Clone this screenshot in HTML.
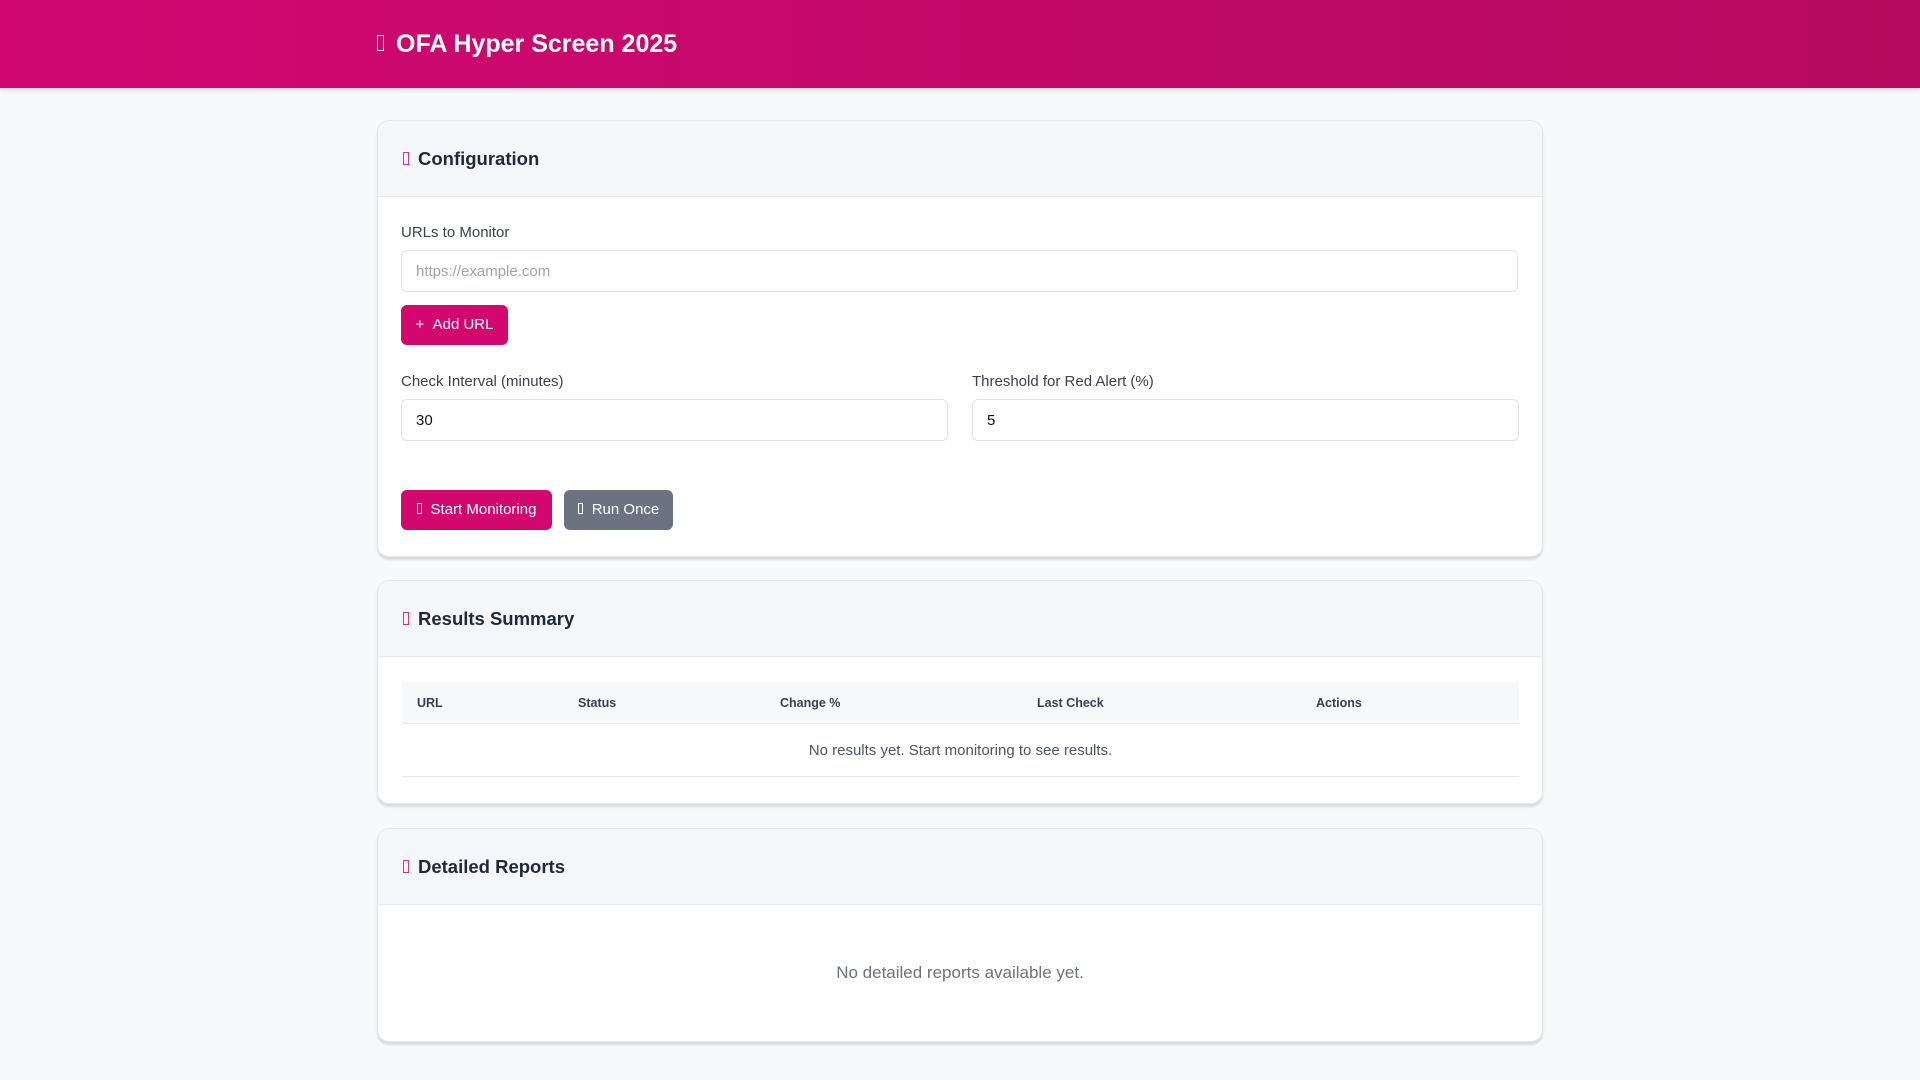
<!DOCTYPE html>
<html><head><meta charset="utf-8"><style>
*{box-sizing:border-box;margin:0;padding:0}
body{width:1920px;height:1080px;background:#f8f9fb;font-family:"Liberation Sans",sans-serif;position:relative;overflow:hidden;color:#1f2937}
.abs{position:absolute}
.hdr{left:0;top:0;width:1920px;height:88px;background:linear-gradient(90deg,#d10872,#b50a5f);box-shadow:0 2px 4px rgba(0,0,0,.15)}
.ttl{left:377px;top:30px;font-size:25px;font-weight:bold;color:#fff;white-space:nowrap}
.box{display:inline-block;border:1.5px solid currentColor;width:7px;height:14px;vertical-align:middle}
.card{left:377px;width:1166px;background:#fff;border:1px solid #e5e7eb;border-radius:12px;box-shadow:0 3px 2px rgba(0,0,0,.12);overflow:hidden}
.ch{position:absolute;left:0;top:0;width:100%;height:76px;background:#f4f6f9;border-bottom:1px solid #e5e7eb}
.ct{position:absolute;left:25px;top:27px;font-size:18.5px;font-weight:bold;color:#1f2937;white-space:nowrap}
.ct .box{color:#d6357f;margin-right:9px;width:6px;height:13px;position:relative;top:-2px}
.lbl{font-size:15px;color:#374151}
.inp{border:1px solid #dfe3e8;border-radius:6px;height:42px;background:#fff;font-size:15px;padding:12px 14px;color:#111}
.btn{border-radius:6px;height:40px;color:#fff;font-size:15px;line-height:40px;text-align:center;white-space:nowrap}
.th{font-size:12.5px;font-weight:bold;color:#374151;top:14px}
</style></head><body>
<div class="abs hdr"></div>
<div class="abs ttl"><span class="box" style="width:7px;height:16px;margin-right:12px;position:relative;top:-2px"></span>OFA Hyper Screen 2025</div>

<div class="abs card" style="top:120px;height:437px">
  <div class="ch"></div>
  <div class="ct"><span class="box"></span>Configuration</div>
</div>
<div class="abs lbl" style="left:401px;top:224px">URLs to Monitor</div>
<div class="abs inp" style="left:401px;top:250px;width:1117px;color:#9ca3af">https://example.com</div>
<div class="abs btn" style="left:401px;top:305px;width:107px;background:#d3086f">+&nbsp;&nbsp;Add URL</div>
<div class="abs lbl" style="left:401px;top:373px">Check Interval (minutes)</div>
<div class="abs lbl" style="left:972px;top:373px">Threshold for Red Alert (%)</div>
<div class="abs inp" style="left:401px;top:399px;width:547px">30</div>
<div class="abs inp" style="left:972px;top:399px;width:547px">5</div>
<div class="abs btn" style="left:401px;top:490px;width:151px;background:#d3086f"><span class="box" style="width:5px;height:11px;margin-right:9px;position:relative;top:-2px"></span>Start Monitoring</div>
<div class="abs btn" style="left:564px;top:490px;width:109px;background:#6b7280"><span class="box" style="width:5px;height:11px;margin-right:9px;position:relative;top:-2px"></span>Run Once</div>

<div class="abs card" style="top:580px;height:224px">
  <div class="ch"></div>
  <div class="ct"><span class="box"></span>Results Summary</div>
  <div class="abs" style="left:24px;top:101px;width:1117px;height:42px;background:#f7f8fa;border-bottom:1px solid #e5e7eb">
    <div class="abs th" style="left:15px">URL</div>
    <div class="abs th" style="left:176px">Status</div>
    <div class="abs th" style="left:378px">Change %</div>
    <div class="abs th" style="left:635px">Last Check</div>
    <div class="abs th" style="left:914px">Actions</div>
  </div>
  <div class="abs" style="left:24px;top:143px;width:1117px;height:53px;border-bottom:1px solid #e5e7eb;text-align:center;font-size:15px;color:#4b5563;line-height:54px">No results yet. Start monitoring to see results.</div>
</div>

<div class="abs card" style="top:828px;height:214px">
  <div class="ch"></div>
  <div class="ct"><span class="box"></span>Detailed Reports</div>
  <div class="abs" style="left:0;top:134px;width:100%;text-align:center;font-size:17px;color:#6b7280">No detailed reports available yet.</div>
</div>
</body></html>
